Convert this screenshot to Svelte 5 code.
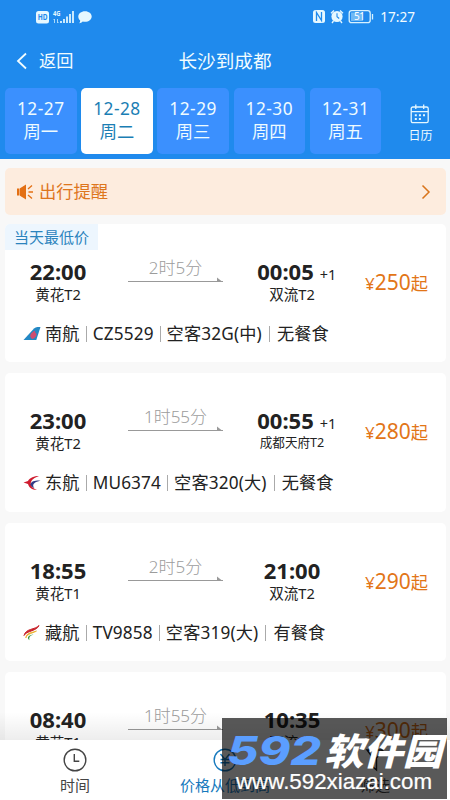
<script lang="ts">
	const days = [
		{ date: '12-27', week: '周一' },
		{ date: '12-28', week: '周二' },
		{ date: '12-29', week: '周三' },
		{ date: '12-30', week: '周四' },
		{ date: '12-31', week: '周五' }
	];

	const flights = [
		{ dep: '22:00', from: '黄花T2', time: '2时5分', arr: '00:05', next: true, to: '双流T2', price: 250, logo: 'cz', airline: '南航', no: 'CZ5529', plane: '空客32G(中)', meal: '无餐食' },
		{ dep: '23:00', from: '黄花T2', time: '1时55分', arr: '00:55', next: true, to: '成都天府T2', price: 280, logo: 'mu', airline: '东航', no: 'MU6374', plane: '空客320(大)', meal: '无餐食' },
		{ dep: '18:55', from: '黄花T1', time: '2时5分', arr: '21:00', next: false, to: '双流T2', price: 290, logo: 'tv', airline: '藏航', no: 'TV9858', plane: '空客319(大)', meal: '有餐食' },
		{ dep: '08:40', from: '黄花T1', time: '1时55分', arr: '10:35', next: false, to: '双流T2', price: 300 }
	];

	let selected = $state('12-28');
</script>

<div class="screen">
	<header>
		<div class="status">
			<svg class="status-left" width="60" height="18" viewBox="0 0 60 18">
				<rect x="0" y="3" width="13" height="12.5" rx="2.5" fill="#e6f8ff" />
				<text x="1.7" y="12.3" font-size="8" font-weight="700" textLength="9.8" lengthAdjust="spacingAndGlyphs" fill="#1f8aed">HD</text>
				<text x="17" y="8.3" font-size="7.5" font-weight="700" textLength="7.5" lengthAdjust="spacingAndGlyphs" fill="#e6f8ff">4G</text>
				<path d="M18.5 11v4M17.5 12l1-1M21.5 11v4l1-1" stroke="#b9e2fa" stroke-width=".9" fill="none" />
				<path d="M25 13v2M28 11v4M31 8.500v6.500M34 6v9M37 3v12" stroke="#e6f8ff" stroke-width="1.7" />
				<path d="M49 3.300c3.800 0 6.700 2.300 6.700 5.200s-2.900 5.300-6.700 5.300c-.8 0-1.600-.1-2.300-.3-1 .9-2.200 1.600-3.500 1.700.7-.8 1-1.700 1-2.700-1.200-1-1.900-2.400-1.900-4 0-2.900 2.900-5.200 6.700-5.200z" fill="#e6f8ff" />
			</svg>
			<div class="status-right">
				<svg width="62" height="16" viewBox="0 0 62 16">
					<rect x="1" y="2" width="12" height="13" rx="2.500" fill="#e6f8ff" />
					<path d="M4.500 13V4.500l5 8V4" stroke="#1f8aed" stroke-width="1.300" fill="none" />
					<circle cx="25" cy="8.500" r="5.600" fill="#e6f8ff" />
					<path d="M19 5.300l3-2.800M31 5.300l-3-2.800M21.500 13l-1.500 2M28.500 13l1.500 2" stroke="#e6f8ff" stroke-width="1.300" />
					<path d="M25 5.200v3.500l2.200 1.800" stroke="#1f8aed" stroke-width="1.100" fill="none" />
					<rect x="37.200" y="2.700" width="21" height="12" rx="2.500" fill="none" stroke="#d7f1ff" stroke-width="1.300" />
					<rect x="39" y="4.500" width="12" height="8.500" fill="#70b9f5" />
					<path d="M60.500 6v5.500" stroke="#d7f1ff" stroke-width="1.300" />
					<text x="42" y="12.200" font-size="10" textLength="11" fill="#fff">51</text>
				</svg>
				<span>17:27</span>
			</div>
		</div>

		<div class="nav">
			<div class="back">
				<svg width="12" height="18" viewBox="0 0 12 18"><path d="M10 1.500L2 9l8 7.500" fill="none" stroke="#f1fcff" stroke-width="1.800" /></svg>
				<span>返回</span>
			</div>
			<h1>长沙到成都</h1>
		</div>

		<div class="dates">
			{#each days as day}
				<button class="day" class:active={selected === day.date} onclick={() => (selected = day.date)}>
					<span class="num">{day.date}</span>
					<span>{day.week}</span>
				</button>
			{/each}
			<div class="calendar">
				<svg width="20" height="20" viewBox="0 0 20 20" fill="none" stroke="#e4f7ff" stroke-width="1.300">
					<rect x="1.200" y="3" width="17" height="15.700" rx="1.600" />
					<path d="M1.200 7.700h17M5.800.5v4.500M13.700.5v4.500" />
					<path d="M4.800 11.300h2M8.900 11.300h2M13 11.300h2M4.800 15h2M8.900 15h2" stroke-width="2" />
				</svg>
				<span>日历</span>
			</div>
		</div>
	</header>

	<main>
		<div class="notice">
			<svg width="18" height="18" viewBox="0 0 18 18">
				<path d="M1 5.500h2.500v7H1zM4 5.300L10 1.500v15L4 12.700z" fill="#e36f13" />
				<path d="M12 6l4-3.500M12.500 9H17M12 12l4 3.500" stroke="#e36f13" stroke-width="1.300" />
			</svg>
			<span>出行提醒</span>
			<svg class="more" width="10" height="16" viewBox="0 0 10 16"><path d="M1.500 1.500L8 8l-6.500 6.500" fill="none" stroke="#d9741b" stroke-width="1.500" /></svg>
		</div>

		{#each flights as f, i}
			<section class="card">
				{#if i === 0}
					<div class="lowest">当天最低价</div>
				{/if}
				<div class="route">
					<div class="stop">
						<b>{f.dep}</b>
						<span>{f.from}</span>
					</div>
					<div class="duration">
						<span>{f.time}</span>
						<svg width="95" height="6" viewBox="0 0 95 6"><path d="M0 4.500h95" stroke="#999" /><path d="M89 .5l5 4h-5z" fill="#999" /></svg>
					</div>
					<div class="stop">
						<b>{f.arr}{#if f.next}<i>+1</i>{/if}</b>
						<span class:small={f.to.length > 5}>{f.to}</span>
					</div>
					<div class="price"><em>¥</em>{f.price}<small>起</small></div>
				</div>
				{#if f.airline}
					<div class="info">
						<svg width="18" height="16" viewBox="0 0 18 16">
							{#if f.logo === 'cz'}
								<path d="M.5 14L11 2.500Q12.500 1 14.500 1h3L13.300 14z" fill="#2388c4" />
								<path d="M9.500 13C5.500 11 7 6.500 12.500 4.500c-.8 1.300-.5 2 .5 2.700 1.500 1.300 0 4.300-3.500 5.800z" fill="#cf4d6f" />
							{:else if f.logo === 'mu'}
								<path d="M16 1C11 1 7 2.500 5 6L.5 7.500 5 9c1 4 4.500 6 9 5.800-4-1.300-6.200-3.200-6.200-6.300C7.800 5 11 3 16 1z" fill="#cf1c2f" />
								<path d="M17.500 5.500C12 5.300 8.500 6 7.300 9.500c1 2 2.200 3 4.200 3.700-1.500-1.700-1.700-3-.7-4.400C12.500 6.700 15 6.500 17.500 5.500z" fill="#313b86" />
							{:else}
								<path d="M16 .5C14 6 3 6 1 10.500 3 3 12 5 16 .5z" fill="#c9242c" stroke="#c9242c" />
								<path d="M13.500 6C11 8 4 8.500 2.800 13 3 7.500 9.500 7.500 13.500 6z" fill="#e9aa20" stroke="#e9aa20" stroke-width=".7" />
								<path d="M10.500 9.500C8 10.500 5.500 11.500 6.500 15.300 3 12.500 6 9.800 10.500 9.500z" fill="#3b9a45" />
							{/if}
						</svg>
						<span>{f.airline}</span>
						<span>{f.no}</span>
						<span>{f.plane}</span>
						<span>{f.meal}</span>
					</div>
				{/if}
			</section>
		{/each}
		<div class="fade"></div>
	</main>

	<footer>
		<div class="tab">
			<svg width="24" height="24" viewBox="0 0 24 24" fill="none" stroke="#444" stroke-width="1.400"><circle cx="12" cy="12" r="10.800" /><path d="M11.300 6v7.200h5" /></svg>
			<span>时间</span>
		</div>
		<div class="tab blue">
			<svg width="24" height="24" viewBox="0 0 24 24" fill="none" stroke="#1679bd" stroke-width="1.400"><circle cx="12" cy="12" r="10.800" /><path d="M7.500 6l4.500 5.500L16.500 6M12 11.500V18M7.500 11.500h9M7.500 14.800h9" /></svg>
			<span>价格从低到高</span>
		</div>
		<div class="tab">
			<svg width="24" height="24" viewBox="0 0 24 24" fill="none" stroke="#222" stroke-width="1.400"><path d="M4 2h16l-6.500 8v12L10 19v-9z" /></svg>
			<span>筛选</span>
		</div>
	</footer>

	<div class="watermark">
		<svg width="225" height="82" viewBox="0 0 225 82">
			<text class="brand" x="5" y="47" font-size="39" textLength="94" lengthAdjust="spacingAndGlyphs" fill="#5b9eff">592</text>
			<text class="brand cn" x="102" y="47" font-size="37" textLength="118" lengthAdjust="spacingAndGlyphs" fill="#fff">软件园</text>
			<text class="url" x="14" y="71" font-size="21.5" textLength="196" lengthAdjust="spacingAndGlyphs" fill="#fff">www.592xiazai.com</text>
		</svg>
	</div>
</div>

<style>
	:global(body) {
		background: #f8f8f8;
	}

	.screen {
		position: relative;
		display: flex;
		flex-direction: column;
		width: 450px;
		height: 800px;
		overflow: hidden;
		background: #f8f8f8;
		color: #222;
		font-family: 'Noto Sans', 'Noto Sans CJK SC', sans-serif;
	}

	svg {
		flex: none;
		display: block;
	}

	header {
		flex: none;
		height: 159px;
		background: #1f8aed;
		color: #f1fcff;
	}

	.status {
		display: flex;
		justify-content: space-between;
		height: 34px;
		padding: 8px 35px 0 36px;
		box-sizing: border-box;
	}

	.status-right {
		display: flex;
		gap: 6px;
		font-size: 13.6px;
		line-height: 18px;
	}

	.nav {
		display: grid;
		grid-template-columns: 1fr auto 1fr;
		align-items: center;
		height: 54px;
		padding: 0 16px;
		line-height: 26px;
	}

	.back {
		display: flex;
		align-items: center;
		gap: 11px;
		font-size: 17.2px;
	}

	h1 {
		margin: 0;
		font-size: 18.6px;
		font-weight: 400;
	}

	.dates {
		display: flex;
		gap: 4.7px;
		padding-left: 5px;
	}

	.day {
		display: flex;
		flex-direction: column;
		align-items: center;
		width: 71.5px;
		height: 66px;
		padding: 10px 0 0;
		border: 0;
		border-radius: 5px;
		background: #3b90fe;
		color: #eefbff;
		font: 400 17.3px/22.5px 'Noto Sans', 'Noto Sans CJK SC', sans-serif;
	}

	.day.active {
		background: #fff;
		color: #1b7eb4;
	}

	.num {
		letter-spacing: 0.5px;
	}

	.calendar {
		display: flex;
		flex: 1;
		flex-direction: column;
		align-items: center;
		gap: 4px;
		padding: 16px 0 0 5px;
		font-size: 12px;
		line-height: 16px;
	}

	main {
		position: relative;
		flex: 1;
		min-height: 0;
		padding: 9px 4px 0 5px;
		overflow: hidden;
	}

	.notice {
		display: flex;
		align-items: center;
		gap: 5px;
		height: 47px;
		margin-bottom: 9px;
		padding: 0 15px 0 11px;
		border-radius: 5px;
		background: #fdecde;
		color: #de761d;
		font-size: 17.3px;
		line-height: 26px;
	}

	.more {
		margin-left: auto;
	}

	.card {
		position: relative;
		height: 138.3px;
		margin-bottom: 11px;
		border-radius: 5px;
		background: #fff;
	}

	.lowest {
		position: absolute;
		top: 0;
		left: 0;
		width: 93px;
		padding-left: 9px;
		box-sizing: border-box;
		border-radius: 5px 0 0 0;
		background: #edf6fe;
		color: #2b83bd;
		font-size: 15px;
		line-height: 26px;
	}

	.route {
		display: grid;
		grid-template-columns: 106px 111px 140px 1fr;
		height: 96px;
		padding-top: 35px;
		box-sizing: border-box;
	}

	.stop {
		display: flex;
		flex-direction: column;
		align-items: center;
		font-size: 14.6px;
		line-height: 22px;
	}

	.stop b {
		height: 24px;
		font-size: 22px;
		line-height: 25px;
		white-space: nowrap;
	}

	.stop i {
		display: inline-block;
		width: 7px;
		margin-left: 6px;
		font-size: 14.4px;
		font-style: normal;
		font-weight: 400;
		line-height: 16px;
	}

	.stop .small {
		font-size: 12.6px;
	}

	.duration {
		display: flex;
		flex-direction: column;
		align-items: center;
		width: 95px;
		margin-left: 17px;
		color: #9c9c9c;
		font-size: 17px;
		font-weight: 300;
		line-height: 18px;
	}

	.price {
		padding: 10px 18px 0 0;
		color: #e27517;
		font-size: 21px;
		line-height: 26px;
		text-align: right;
		white-space: nowrap;
	}

	.price em {
		font-size: 17px;
		font-style: normal;
	}

	.price small {
		font-size: 17.3px;
	}

	.info {
		display: flex;
		align-items: center;
		height: 28px;
		padding-left: 18px;
		font-size: 17.2px;
		letter-spacing: 0.15px;
	}

	.info svg {
		margin-right: 4px;
	}

	.info span {
		line-height: 26px;
		white-space: nowrap;
	}

	.info span + span::before {
		display: inline-block;
		width: 1px;
		height: 16px;
		margin: 0 6px;
		background: #aaa;
		vertical-align: -2px;
		content: '';
	}

	.info span:last-child::before {
		margin: 0 7px;
	}

	.fade {
		position: absolute;
		inset: auto 0 0;
		height: 28px;
		background: linear-gradient(rgba(0, 0, 0, 0), rgba(0, 0, 0, 0.07));
	}

	footer {
		display: grid;
		grid-template-columns: repeat(3, 1fr);
		flex: none;
		height: 60px;
		background: #fff;
	}

	.tab {
		display: flex;
		flex-direction: column;
		align-items: center;
		gap: 2px;
		padding-top: 8px;
		color: #444;
		font-size: 15px;
		line-height: 22px;
	}

	.blue {
		color: #1679bd;
	}

	.watermark {
		position: absolute;
		top: 718px;
		left: 222px;
		width: 225px;
		height: 81px;
		background: rgba(0, 0, 0, 0.65);
	}

	.brand {
		font-family: Inter, sans-serif;
		font-style: italic;
		font-weight: 800;
	}

	.cn {
		font-family: 'Noto Sans CJK SC', sans-serif;
	}

	.url {
		font-family: 'Liberation Sans', sans-serif;
		stroke: #fff;
		stroke-width: 0.2px;
	}
</style>
